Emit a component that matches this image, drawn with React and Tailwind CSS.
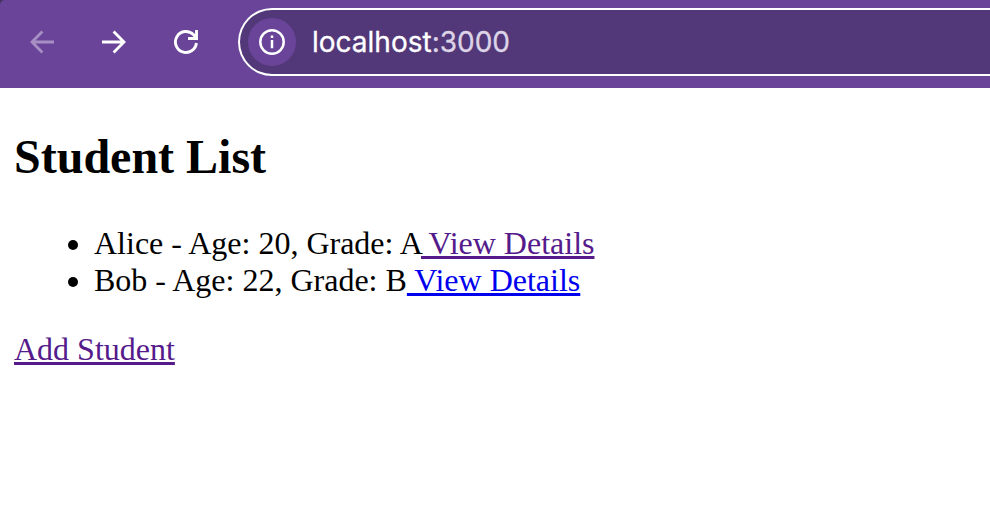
const students = [
  { name: 'Alice', age: 20, grade: 'A', visited: true },
  { name: 'Bob', age: 22, grade: 'B', visited: false },
];

function BackIcon() {
  return (
    <svg viewBox="0 0 24 24" className="size-6 text-[#a78fc4]" fill="none" stroke="currentColor" strokeWidth="2.8">
      <path d="M24 12H2.5M12.4 1.4L2 12L12.4 22.6" />
    </svg>
  );
}

function ForwardIcon() {
  return (
    <svg viewBox="0 0 24 24" className="size-6 text-white" fill="none" stroke="currentColor" strokeWidth="2.8">
      <path d="M0 12H21.5M11.6 1.4L22 12L11.6 22.6" />
    </svg>
  );
}

function ReloadIcon() {
  return (
    <svg viewBox="0 0 24 24" className="size-6 text-white" fill="none" stroke="currentColor" strokeWidth="2.9">
      <path d="M22.4 13A10.5 10.5 0 1 1 19.4 4.6L22.4 8" />
      <path d="M22.5 0V8.5H14" />
    </svg>
  );
}

function InfoIcon() {
  return (
    <svg viewBox="0 0 26 26" className="size-[26px] text-white" fill="none" stroke="currentColor" strokeWidth="2.5">
      <circle cx="13" cy="13" r="11.7" />
      <path d="M13 11V19.2M13 6.6V9.1" />
    </svg>
  );
}

function Toolbar() {
  return (
    <div className="bg-[#463163]">
      <header className="flex h-[88px] items-start rounded-tl-[5px] bg-[#694499] pt-2 pl-[30px]">
        <nav className="flex h-[68px] items-center gap-12">
          <BackIcon />
          <ForwardIcon />
          <ReloadIcon />
        </nav>
        <div className="ml-10 flex h-[68px] flex-1 items-center rounded-l-full border-2 border-r-0 border-white bg-[#523878] pl-2">
          <div className="flex size-12 items-center justify-center rounded-full bg-[#694499]">
            <InfoIcon />
          </div>
          <span className="ml-4 font-['Inter',sans-serif] text-[28px] leading-8 whitespace-nowrap text-white [-webkit-text-stroke:0.3px]">
            localhost<span className="text-[#ddd4e7]">:3000</span>
          </span>
        </div>
      </header>
    </div>
  );
}

export default function App() {
  return (
    <div className="h-screen overflow-hidden bg-white font-['Liberation_Serif',serif] text-[32px] leading-[37px] text-black">
      <Toolbar />
      <main className="pt-[41px] pl-[14px]">
        <h2 className="text-[48px] leading-[55px] font-bold">Student List</h2>
        <ul className="mt-[41px] list-disc pl-20">
          {students.map((s) => (
            <li key={s.name}>
              {s.name} - Age: {s.age}, Grade: {s.grade}
              <a
                href="#"
                className={`underline decoration-[3px] underline-offset-2 [text-decoration-skip-ink:none] ${s.visited ? 'text-[#551a8b]' : 'text-[#0000ee]'}`}
              >
                {' View Details'}
              </a>
            </li>
          ))}
        </ul>
        <a href="#" className="mt-8 inline-block text-[#551a8b] underline decoration-[3px] underline-offset-2">
          Add Student
        </a>
      </main>
    </div>
  );
}
